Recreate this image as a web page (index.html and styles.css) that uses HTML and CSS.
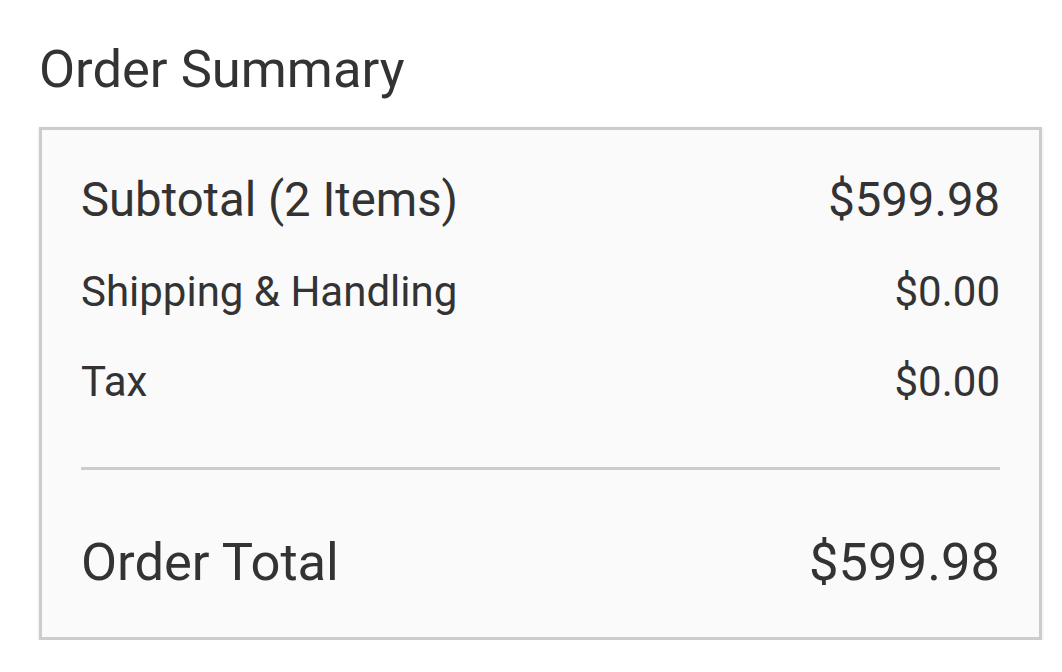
FILE: index.html
```html
<!DOCTYPE html>
<html>
<head>
<meta charset="utf-8">
<link rel="stylesheet" href="styles.css">
</head>
<body>
<main class="page">
  <h1 class="title">Order Summary</h1>
  <section class="summary">
    <div class="row row-main">
      <span>Subtotal (2 Items)</span>
      <span>$599.98</span>
    </div>
    <div class="row row-minor row-ship">
      <span>Shipping &amp; Handling</span>
      <span>$0.00</span>
    </div>
    <div class="row row-minor row-tax">
      <span>Tax</span>
      <span>$0.00</span>
    </div>
    <hr class="divider">
    <div class="row row-total">
      <span>Order Total</span>
      <span>$599.98</span>
    </div>
  </section>
</main>
</body>
</html>
```
FILE: styles.css
```css
html, body {
  margin: 0;
  padding: 0;
  background: #ffffff;
}
body {
  font-family: Roboto, "Liberation Sans", Arial, sans-serif;
  color: #333333;
}
.page {
  padding: 39px 20px 0 39px;
}
.title {
  margin: 0 0 28px 0;
  font-size: 52.5px;
  line-height: 60px;
  font-weight: 400;
  color: #333333;
}
.summary {
  border: 3px solid #cccccc;
  background: #fafafa;
  box-shadow: 0 1px 3px rgba(0, 0, 0, 0.12);
  padding: 42px 39px 45px 39px;
}
.row {
  display: flex;
  justify-content: space-between;
  align-items: baseline;
}
.row-main {
  font-size: 47.25px;
  line-height: 56px;
}
.row-minor {
  font-size: 42px;
  line-height: 50px;
}
.row-ship {
  margin-top: 39px;
}
.row-tax {
  margin-top: 40px;
}
.divider {
  margin: 60px 0 0 0;
  border: 0;
  height: 3px;
  background: #cccccc;
}
.row-total {
  margin-top: 62px;
  font-size: 52.5px;
  line-height: 60px;
}
```
